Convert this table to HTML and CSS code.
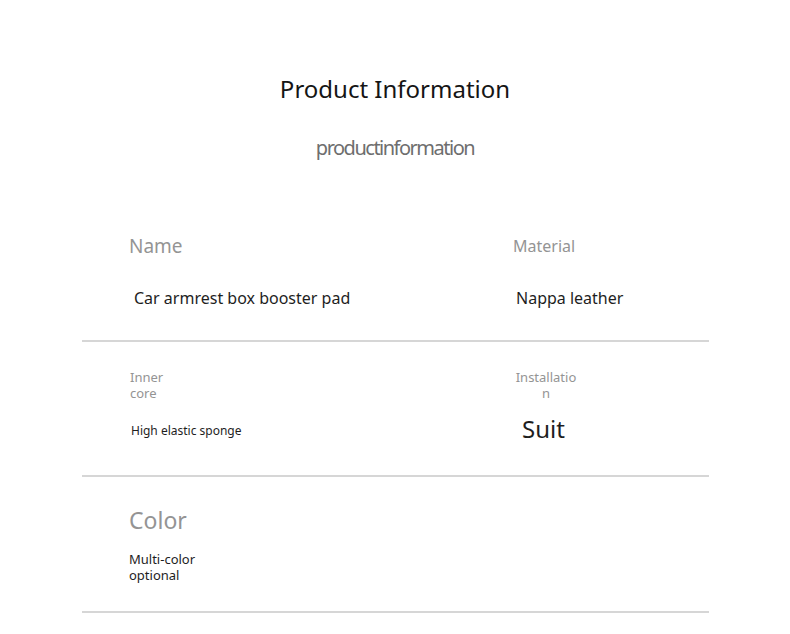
FILE: index.html
```html
<!DOCTYPE html>
<html>
<head>
<meta charset="utf-8">
<link rel="stylesheet" href="styles.css">
</head>
<body>
<div class="page">
  <h1 class="title">Product Information</h1>
  <div class="subtitle">productinformation</div>
  <div class="table">
    <div class="row row1">
      <div class="cell left">
        <div class="label label-lg">Name</div>
        <div class="value value-md">Car armrest box booster pad</div>
      </div>
      <div class="cell right">
        <div class="label label-md">Material</div>
        <div class="value value-md v-nappa">Nappa leather</div>
      </div>
    </div>
    <div class="row row2">
      <div class="cell left">
        <div class="label label-sm narrow">Inner core</div>
        <div class="value value-sm v-sponge">High elastic sponge</div>
      </div>
      <div class="cell right">
        <div class="label label-sm install">Installation</div>
        <div class="value value-xl v-suit">Suit</div>
      </div>
    </div>
    <div class="row row3">
      <div class="cell left">
        <div class="label label-xl">Color</div>
        <div class="value value-sm multi">Multi-color optional</div>
      </div>
    </div>
  </div>
</div>
</body>
</html>
```

FILE: styles.css
```css
html, body {
  margin: 0;
  padding: 0;
  background: #fff;
}
body {
  font-family: "Noto Sans", "Open Sans", sans-serif;
  color: #1a1a1a;
}
.page {
  width: 790px;
  padding-top: 73px;
}
.title {
  margin: 0;
  text-align: center;
  font-size: 24px;
  font-weight: 400;
  line-height: 32px;
  color: #151515;
}
.subtitle {
  margin-top: 30px;
  text-align: center;
  font-size: 20px;
  line-height: 26px;
  letter-spacing: -1.5px;
  color: #6e6e6e;
}
.table {
  margin: 68px 0 0 82px;
  width: 627px;
}
.row {
  display: flex;
  border-bottom: 2px solid #d6d6d6;
}
.cell {
  display: flex;
  flex-direction: column;
}
.left {
  width: 431px;
  padding-left: 47px;
  box-sizing: border-box;
}
.right {
  flex: 1;
}
.label {
  color: #949494;
}
.label-lg { font-size: 19px; line-height: 26px; }
.label-md { font-size: 16px; line-height: 22px; }
.label-xl { font-size: 23px; line-height: 30px; }
.label-sm { font-size: 13px; line-height: 16px; }
.value { color: #1e1e1e; }
.value-md { font-size: 16px; line-height: 22px; }
.value-sm { font-size: 13px; line-height: 16px; }
.value-xl { font-size: 24px; line-height: 30px; }

.row1 { height: 113px; box-sizing: border-box; }
.row1 .cell { padding-top: 4px; }
.row1 .left .value { margin-top: 28px; padding-left: 5px; }
.row1 .right .label { margin-top: 2px; }
.row1 .right .value { margin-top: 30px; padding-left: 3px; }

.row2 { height: 135px; box-sizing: border-box; }
.row2 .cell { padding-top: 27px; }
.narrow { width: 40px; padding-left: 1px; }
.v-sponge { margin-top: 22px; padding-left: 2px; font-size: 12px; }
.install { width: 62px; text-align: center; padding-left: 2px; word-break: break-all; }
.v-suit { margin-top: 13px; padding-left: 9px; }

.row3 { height: 136px; box-sizing: border-box; }
.row3 .cell { padding-top: 28px; }
.multi { margin-top: 16px; width: 80px; }
```
